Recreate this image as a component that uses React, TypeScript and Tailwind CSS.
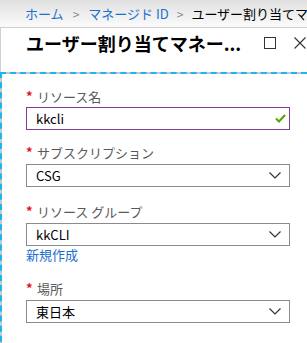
import React from "react";

const Chevron = () => (
  <svg width="12" height="7" viewBox="0 0 12 7" className="shrink-0">
    <path d="M0.5 0.5 L6 6 L11.5 0.5" fill="none" stroke="#333" strokeWidth="1.2" />
  </svg>
);

const Label = ({ text }: { text: string }) => (
  <div className="flex items-start h-[18px] leading-[18px] text-[13px] text-[#595959]">
    <span className="text-[#e81123] text-[13px] font-bold leading-[16px] w-[11px]">*</span>
    <span>{text}</span>
  </div>
);

const Select = ({ value }: { value: string }) => (
  <div className="mt-[2px] h-[23px] border border-[#8a8a8a] flex items-center justify-between pl-[9px] pr-[8px] text-[13px] text-black leading-[18px]">
    <span>{value}</span>
    <Chevron />
  </div>
);

export default function App() {
  return (
    <div className="w-[307px] h-[343px] overflow-hidden bg-white font-['Noto_Sans_CJK_JP',sans-serif]">
      <div className="h-[27px] bg-linear-to-b from-[#e0e0e0] to-[#fbfbfb] flex items-center pl-[25px] text-[13px] leading-[18px] whitespace-nowrap overflow-hidden">
        <span className="text-[#1a6fd1]">ホーム</span>
        <span className="text-[#8a8a8a] mx-[9px] text-[12px]">&gt;</span>
        <span className="text-[#1a6fd1]">マネージド ID</span>
        <span className="text-[#8a8a8a] mx-[8px] text-[12px]">&gt;</span>
        <span className="text-black">ユーザー割り当てマ</span>
      </div>
      <div className="border-t border-l border-[#cfcfcf]">
        <div className="h-[44px] flex items-start pt-[5px] pl-[25px] pr-[1px]">
          <div className="text-[18px] leading-[20px] font-bold text-black whitespace-nowrap flex-1">
            ユーザー割り当てマネー...
          </div>
          <div className="flex items-center gap-[18px] mt-[4px]">
            <div className="w-[12px] h-[12px] border border-[#333]" />
            <svg width="12" height="12" viewBox="0 0 12 12">
              <path d="M0.5 0.5 L11.5 11.5 M11.5 0.5 L0.5 11.5" stroke="#333" strokeWidth="1.1" />
            </svg>
          </div>
        </div>
        <div className="bg-[#c8c8c8] -ml-px">
          <div className="bg-white bg-clip-padding border-dashed border-t-2 border-l-2 border-[#1ab6ee] h-[280px] pl-[24px] pr-[17px] pt-[14px]">
            <Label text="リソース名" />
            <div className="mt-[1px] h-[23px] border border-[#7f3f98] flex items-center justify-between pl-[9px] pr-[3px] text-[13px] text-black leading-[18px]">
              <span>kkcli</span>
              <svg width="11" height="9" viewBox="0 0 11 9">
                <path d="M1 4.5 L4 7.5 L10 1" fill="none" stroke="#57a300" strokeWidth="2" />
              </svg>
            </div>
            <div className="mt-[14px]">
              <Label text="サブスクリプション" />
              <Select value="CSG" />
            </div>
            <div className="mt-[16px]">
              <Label text="リソース グループ" />
              <Select value="kkCLI" />
              <div className="text-[13px] leading-[16px] text-[#1a6fd1] mt-[1px]">新規作成</div>
            </div>
            <div className="mt-[17px]">
              <Label text="場所" />
              <Select value="東日本" />
            </div>
          </div>
        </div>
      </div>
    </div>
  );
}
